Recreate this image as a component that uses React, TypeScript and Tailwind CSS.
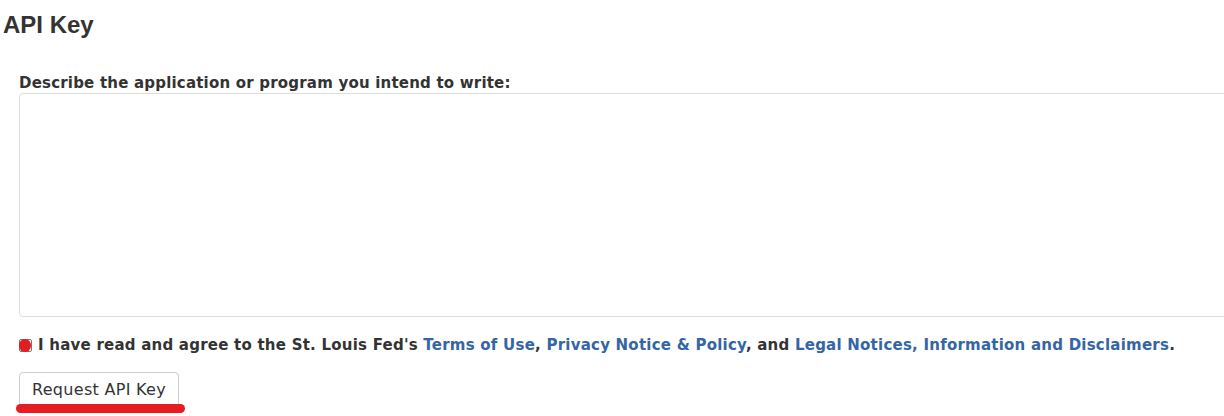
export default function App() {
  return (
    <div className="w-[1224px] h-[416px] overflow-hidden bg-white text-[#333]">
      <h1 className="pl-[3px] pt-[9px] font-['Liberation_Sans',Arial,sans-serif] text-[24px] font-bold leading-[32px]">
        API Key
      </h1>

      <div className="pl-[19px] pt-[32px] font-['DejaVu_Sans',Verdana,sans-serif]">
        <label className="block text-[15px] font-bold leading-[20px] tracking-[0.2px]">
          Describe the application or program you intend to write:
        </label>
        <textarea className="block h-[224px] w-[1220px] resize-none rounded-[4px] border border-[#ddd] bg-white" />

        <div className="mt-[18px] flex items-center text-[15px] font-bold leading-[20px] tracking-[0.23px]">
          <span className="relative mr-[6px] inline-block h-[13px] w-[13px] rounded-[2px] border border-[#767676] bg-white">
            <span className="absolute -left-[1px] -top-[1px] h-[13px] w-[12px] rounded-full bg-[#e41e20]" />
          </span>
          <span>
            I have read and agree to the St. Louis Fed's{" "}
            <a className="text-[#3465a4]">Terms of Use</a>,{" "}
            <a className="text-[#3465a4]">Privacy Notice &amp; Policy</a>, and{" "}
            <a className="text-[#3465a4]">Legal Notices, Information and Disclaimers</a>.
          </span>
        </div>

        <div className="relative mt-[17px] inline-block">
          <button className="h-[36px] rounded-[4px] border border-[#ccc] bg-white px-[12px] text-[16px] leading-[20px] tracking-[0.3px] text-[#333]">
            Request API Key
          </button>
          <span className="absolute left-[-3px] top-[32px] h-[9px] w-[169px] rounded-full bg-[#e41e20]" />
        </div>
      </div>
    </div>
  );
}
